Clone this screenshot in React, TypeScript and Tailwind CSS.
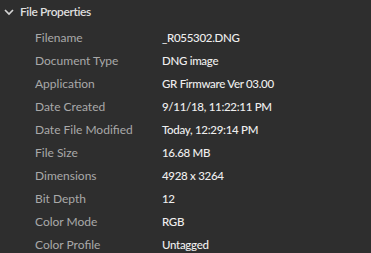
const rows: [string, string][] = [
	["Filename", "_R055302.DNG"],
	["Document Type", "DNG image"],
	["Application", "GR Firmware Ver 03.00"],
	["Date Created", "9/11/18, 11:22:11 PM"],
	["Date File Modified", "Today, 12:29:14 PM"],
	["File Size", "16.68 MB"],
	["Dimensions", "4928 x 3264"],
	["Bit Depth", "12"],
	["Color Mode", "RGB"],
	["Color Profile", "Untagged"]
];

export default function App() {
	return (
		<div className="w-[371px] h-[253px] overflow-hidden bg-[#2e2e2e] font-['Lato',sans-serif]">
			<div className="flex items-center h-[23px] pl-[4px] gap-[6px] text-[12px] font-semibold tracking-[-0.4px] text-[#dedede]">
				<svg width="10" height="7" viewBox="0 0 10 7" className="mt-[1px]">
					<path d="M1 1 L5 5 L9 1" fill="none" stroke="#d4d4d4" strokeWidth="1.7" />
				</svg>
				<span className="pt-[1px]">File Properties</span>
			</div>
			<div className="flex flex-col pt-[3px]">
				{rows.map(([label, value]) => (
					<div key={label} className="flex items-center h-[23px] whitespace-nowrap">
						<span className="w-[162px] shrink-0 pl-[35px] text-[12px] text-[#a9a9a9]">{label}</span>
						<span className="text-[11.5px] tracking-[-0.3px] font-medium text-[#efefef]">{value}</span>
					</div>
				))}
			</div>
		</div>
	);
}
